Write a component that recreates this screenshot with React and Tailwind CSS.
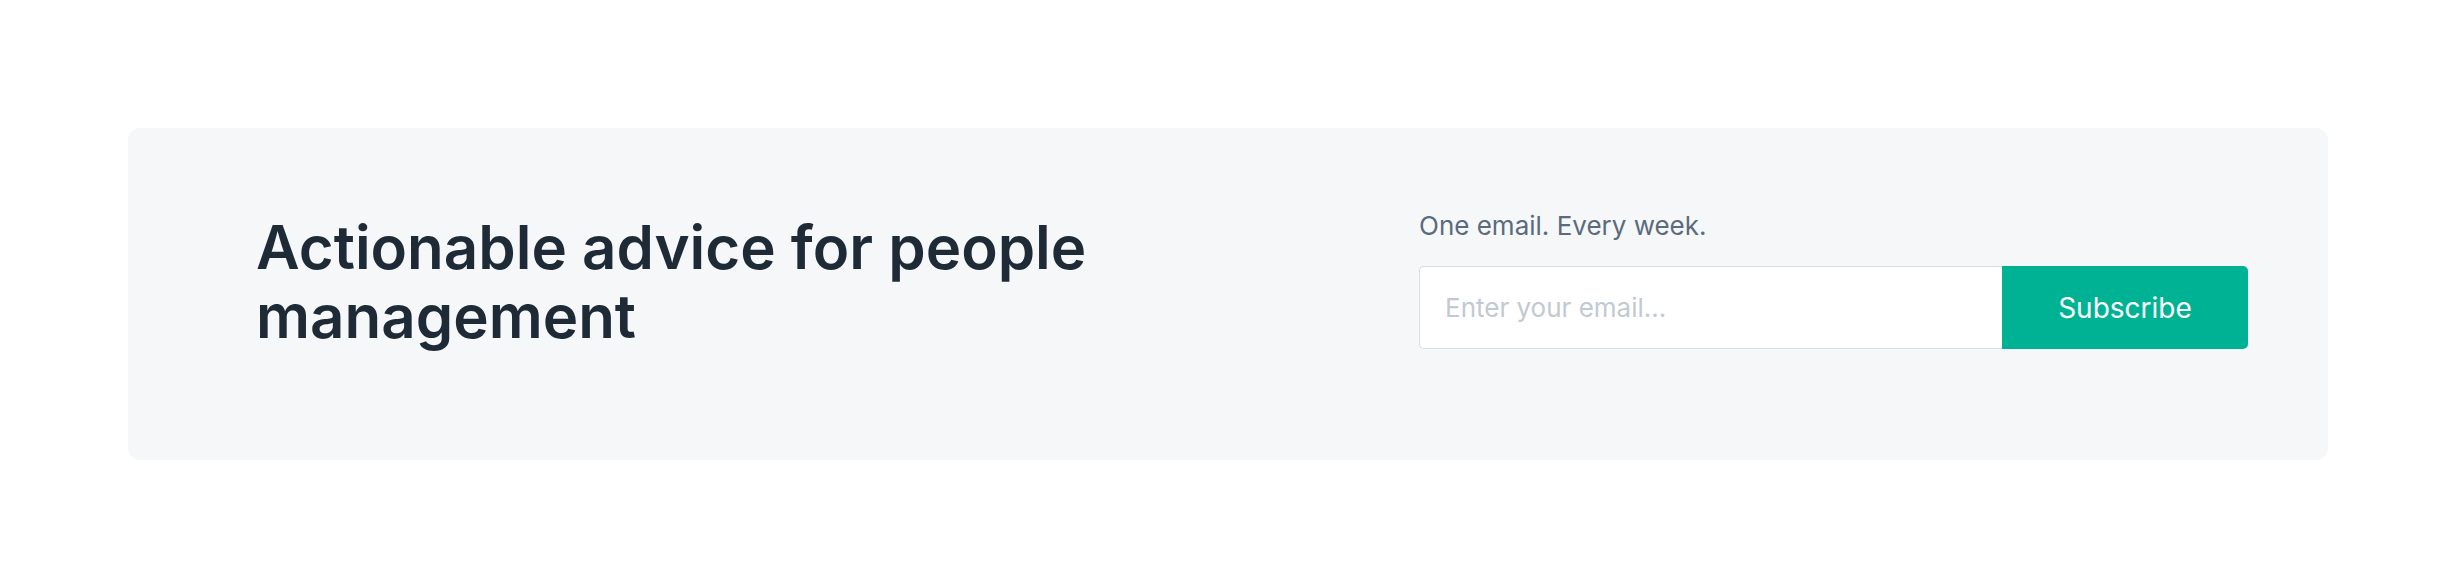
import React from 'react';

const App = () => {
  return (
    <div className="min-h-screen bg-white px-[128px] py-[128px]" style={{ fontFamily: 'Inter, "Noto Sans", sans-serif' }}>
      {/* Newsletter card */}
      <div className="flex h-[332px] items-start justify-between rounded-xl bg-[#f5f7f9] pl-[128px] pr-[80px] pt-[80px]">
        <h2 className="mt-[5px] w-[900px] text-[60px] font-semibold leading-[69px] text-[#1e2b37]">
          Actionable advice for people management
        </h2>

        <div className="w-[829px]">
          <p className="mb-[22px] text-[26px] leading-[36px] text-[#5b6b7c]">One email. Every week.</p>
          <form className="flex h-[83px]" onSubmit={(e) => e.preventDefault()}>
            <input
              type="email"
              placeholder="Enter your email..."
              className="h-full flex-1 rounded-l-[5px] border border-r-0 border-[#d8dde3] bg-white px-[25px] text-[26px] text-[#1e2b37] outline-none placeholder:text-[#c2c9d2]"
            />
            <button
              type="submit"
              className="h-full w-[246px] rounded-r-[5px] bg-[#00b294] text-[28px] text-white hover:bg-[#00a386]"
            >
              Subscribe
            </button>
          </form>
        </div>
      </div>
    </div>
  );
};

export default App;
